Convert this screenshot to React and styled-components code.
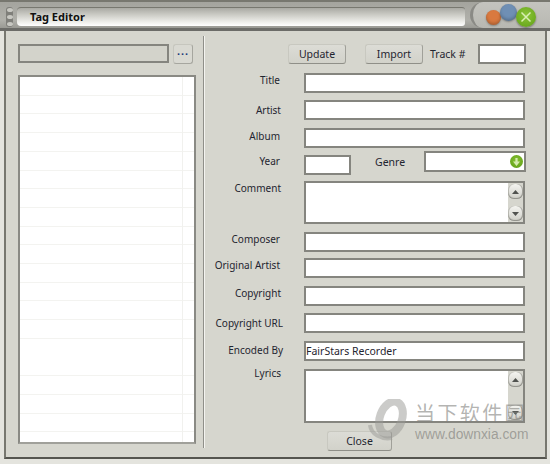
import React from "react";
import styled, { createGlobalStyle } from "styled-components";

const GlobalStyle = createGlobalStyle`
  html, body {
    margin: 0;
    padding: 0;
    background: #d6d6ce;
  }
  body {
    font-family: "Noto Sans", "Liberation Sans", sans-serif;
    font-size: 10.5px;
    color: #1f2530;
  }
`;

// top = gap above the row, dy/dx = how far the label sits off its usual place
const fields = [
  { label: "Title", top: 9, dy: 0, dx: 1 },
  { label: "Artist", top: 7, dy: 3, dx: 0 },
  { label: "Album", top: 8, dy: 1, dx: 1 },
];

const lowerFields = [
  { label: "Composer", top: 8, dy: 0, dx: 1 },
  { label: "Original Artist", top: 6, dy: 0, dx: 1 },
  { label: "Copyright", top: 8, dy: 0, dx: 0 },
  { label: "Copyright URL", top: 7, dy: 3, dx: -2 },
  { label: "Encoded By", top: 8, dy: 2, dx: -2, value: "FairStars Recorder" },
];

const ScrollArrow = ({ down }) => (
  <ScrollButton>
    <svg width="7" height="4" viewBox="0 0 7 4">
      <path d={down ? "M0 0h7L3.5 4z" : "M0 4h7L3.5 0z"} fill="#50524f" />
    </svg>
  </ScrollButton>
);

const App = () => {
  return (
    <Window>
      <GlobalStyle />
      <TitleBar>
        <Grip>
          <GripDot />
          <GripDot />
          <GripDot />
        </Grip>
        <TitlePlate>Tag Editor</TitlePlate>
        <Controls>
          <Orb $color="#d9793f" $size={15} $left={13} $top={8} />
          <Orb $color="#6f8fb4" $size={17} $left={27} $top={2} />
          <CloseOrb>
            <svg width="12" height="12" viewBox="0 0 12 12">
              <path d="M1.5 1.5l9 9M10.5 1.5l-9 9" stroke="#d9efb4" strokeWidth="1.5" />
            </svg>
          </CloseOrb>
        </Controls>
      </TitleBar>
      <Body>
        <LeftPanel>
          <PathRow>
            <PathField />
            <BrowseButton>...</BrowseButton>
          </PathRow>
          <FileList />
        </LeftPanel>
        <Divider />
        <RightPanel>
          <TopRow>
            <Button>Update</Button>
            <Button>Import</Button>
            <TrackLabel>Track #</TrackLabel>
            <TrackField />
          </TopRow>
          {fields.map((f) => (
            <Row key={f.label} $top={f.top}>
              <Label $dy={f.dy} $dx={f.dx}>{f.label}</Label>
              <Field readOnly value="" />
            </Row>
          ))}
          <Row $top={7}>
            <Label $dy={-1} $dx={1}>Year</Label>
            <YearField readOnly value="" />
            <GenreLabel>Genre</GenreLabel>
            <GenreBox>
              <GenreArrow>
                <svg width="7" height="8" viewBox="0 0 7 8">
                  <path d="M2.4 0h2.2v3.6H7L3.5 8 0 3.6h2.4z" fill="#d5ebae" />
                </svg>
              </GenreArrow>
            </GenreBox>
          </Row>
          <Row $top={6}>
            <Label $dy={0} $dx={0}>Comment</Label>
            <MemoBox $height={43}>
              <MemoBar>
                <ScrollArrow />
                <ScrollArrow down />
              </MemoBar>
            </MemoBox>
          </Row>
          {lowerFields.map((f) => (
            <Row key={f.label} $top={f.top}>
              <Label $dy={f.dy} $dx={f.dx}>{f.label}</Label>
              <Field readOnly value={f.value || ""} />
            </Row>
          ))}
          <Row $top={8}>
            <Label $dy={-3} $dx={0}>Lyrics</Label>
            <MemoBox $height={54}>
              <MemoBar>
                <ScrollArrow />
                <ScrollArrow down />
              </MemoBar>
            </MemoBox>
          </Row>
          <Footer>
            <Button $width={65}>Close</Button>
          </Footer>
        </RightPanel>
      </Body>
      <Watermark>
        <svg width="42" height="42" viewBox="0 0 42 42">
          <ellipse cx="23" cy="19" rx="11" ry="17" transform="rotate(20 23 19)" fill="none" stroke="#98989480" strokeWidth="8" />
          <path d="M2 26c1 9 11 15 22 13" fill="none" stroke="#9c9c9888" strokeWidth="4" />
        </svg>
        <WatermarkText>
          <WatermarkCn>当下软件园</WatermarkCn>
          <WatermarkUrl>www.downxia.com</WatermarkUrl>
        </WatermarkText>
      </Watermark>
    </Window>
  );
};

const Window = styled.div`
  position: relative;
  width: 550px;
  height: 464px;
  overflow: hidden;
  box-sizing: border-box;
  background: #e4e4de;
  display: flex;
  flex-direction: column;
`;

const TitleBar = styled.div`
  height: 31px;
  flex: none;
  box-sizing: border-box;
  display: flex;
  align-items: flex-start;
  padding: 5px 0 0 6px;
  border-top: 2px solid #77776f;
  border-bottom: 3px solid #6c6c68;
  background: linear-gradient(#a4a49e, #b0b0aa 70%, #9a9a94);
`;

const Grip = styled.div`
  width: 7px;
  height: 20px;
  display: flex;
  flex-direction: column;
  justify-content: space-between;
  align-items: center;
  padding: 1px 0;
  box-sizing: border-box;
  background: #7f7f7a;
  border-radius: 3px;
`;

const GripDot = styled.div`
  width: 6px;
  height: 4px;
  border-radius: 50%;
  background: #c8c8c2;
`;

const TitlePlate = styled.div`
  width: 448px;
  height: 19px;
  margin-left: 4px;
  box-sizing: border-box;
  padding-left: 13px;
  font-size: 11px;
  font-weight: 700;
  line-height: 18px;
  color: #111;
  border-radius: 4px 3px 3px 4px;
  border-top: 1px solid #77776f;
  background: linear-gradient(#a9a9a3 0%, #c9c9c3 35%, #ecece8 75%, #ffffff 100%);
`;

const Controls = styled.div`
  position: relative;
  flex: 1;
  height: 26px;
  margin-top: -5px;
  margin-left: 5px;
  border-radius: 16px 0 0 16px;
  border-left: 3px solid #8a8a85;
  background: linear-gradient(#c4c4bf, #b8b8b2);
`;

const Orb = styled.div`
  position: absolute;
  left: ${(p) => p.$left}px;
  top: ${(p) => p.$top}px;
  width: ${(p) => p.$size}px;
  height: ${(p) => p.$size}px;
  border-radius: 50%;
  background: ${(p) => p.$color};
  box-shadow: inset 0 -2px 3px rgba(0, 0, 0, 0.2), 0 1px 2px rgba(0, 0, 0, 0.3);
`;

const CloseOrb = styled.div`
  position: absolute;
  left: 43px;
  top: 5px;
  width: 20px;
  height: 20px;
  border-radius: 50%;
  display: flex;
  align-items: center;
  justify-content: center;
  background: radial-gradient(circle at 50% 40%, #8cc63a, #5f9e14);
  box-shadow: 0 1px 2px rgba(0, 0, 0, 0.4);
`;

const Body = styled.div`
  flex: none;
  height: 428px;
  box-sizing: border-box;
  margin: 0 3px 0 4px;
  padding: 0 0 0 12px;
  display: flex;
  background: #d6d6ce;
  border-left: 2px solid #77776f;
  border-right: 2px solid #77776f;
  border-bottom: 2px solid #55554f;
`;

const LeftPanel = styled.div`
  width: 178px;
  flex: none;
  padding-top: 13px;
  display: flex;
  flex-direction: column;
`;

const PathRow = styled.div`
  display: flex;
  align-items: flex-start;
  gap: 4px;
`;

const PathField = styled.div`
  width: 151px;
  height: 19px;
  box-sizing: border-box;
  background: #d3d3cb;
  border: 2px solid #85857f;
`;

const BrowseButton = styled.button`
  width: 20px;
  height: 20px;
  padding: 0 0 6px;
  box-sizing: border-box;
  font: 700 11px "Liberation Sans", sans-serif;
  letter-spacing: 1px;
  color: #223a7a;
  background: #d9d9d2;
  border: 1px solid #c6c6be;
  border-right-color: #a6a69f;
  border-bottom-color: #a6a69f;
  border-radius: 3px;
`;

const FileList = styled.div`
  width: 178px;
  height: 369px;
  margin-top: 11px;
  box-sizing: border-box;
  border: 2px solid #8a8a84;
  border-bottom-color: #a0a09a;
  background:
    linear-gradient(#f1f1ee, #f1f1ee) 162px 0 / 1px 100% no-repeat,
    repeating-linear-gradient(#fff 0, #fff 17.7px, #f3f3f0 17.7px, #f3f3f0 18.7px);
`;

const Divider = styled.div`
  width: 1px;
  height: 412px;
  margin: 5px 0 0 7px;
  flex: none;
  background: #8f8f89;
  border-right: 1px solid #f4f4f0;
`;

const RightPanel = styled.div`
  flex: 1;
  padding-top: 13px;
  display: flex;
  flex-direction: column;
`;

const TopRow = styled.div`
  display: flex;
  align-items: center;
  padding-left: 83px;
  height: 20px;
`;

const Button = styled.button`
  width: ${(p) => p.$width || 58}px;
  height: 20px;
  padding: 0 0 1px;
  margin-right: 19px;
  box-sizing: border-box;
  font: 10.5px "Noto Sans", sans-serif;
  color: #1f2530;
  background: linear-gradient(#dcdcd6, #d2d2ca);
  border: 1px solid #c8c8c0;
  border-right-color: #a0a099;
  border-bottom-color: #8f8f88;
  border-radius: 3px;
`;

const TrackLabel = styled.span`
  margin-left: -12px;
  width: 48px;
`;

const boxBorder = `
  box-sizing: border-box;
  background: #fff;
  border: 2px solid #85857f;
  outline: none;
`;

const TrackField = styled.div`
  ${boxBorder}
  width: 48px;
  height: 20px;
`;

const Row = styled.div`
  display: flex;
  align-items: flex-start;
  margin-top: ${(p) => p.$top}px;
`;

const Label = styled.label`
  width: ${(p) => 76 - p.$dx}px;
  margin-right: ${(p) => 23 + p.$dx}px;
  margin-top: ${(p) => p.$dy}px;
  flex: none;
  text-align: right;
  font-size: 10px;
  line-height: 15px;
`;

const Field = styled.input`
  ${boxBorder}
  width: 221px;
  height: 20px;
  padding: 0;
  font: 10.5px "Noto Sans", sans-serif;
  color: #1f2530;
`;

const YearField = styled.input`
  ${boxBorder}
  width: 47px;
  height: 20px;
  padding: 0;
`;

const GenreLabel = styled.span`
  width: 73px;
  padding-left: 24px;
  line-height: 15px;
  box-sizing: border-box;
`;

const GenreBox = styled.div`
  ${boxBorder}
  width: 102px;
  height: 21px;
  margin-top: -4px;
  display: flex;
  align-items: center;
  justify-content: flex-end;
  padding-right: 1px;
`;

const GenreArrow = styled.div`
  width: 13px;
  height: 13px;
  border-radius: 50%;
  display: flex;
  align-items: center;
  justify-content: center;
  background: radial-gradient(circle at 50% 40%, #86c233, #5c9a12);
`;

const MemoBox = styled.div`
  ${boxBorder}
  width: 221px;
  height: ${(p) => p.$height}px;
  display: flex;
  justify-content: flex-end;
`;

const MemoBar = styled.div`
  width: 15px;
  padding: 1px 0;
  display: flex;
  flex-direction: column;
  justify-content: space-between;
  background: #d6d6ce;
`;

const ScrollButton = styled.div`
  width: 15px;
  height: 15px;
  border-radius: 6px;
  display: flex;
  align-items: center;
  justify-content: center;
  background: linear-gradient(#f4f4f0, #cfcfc8);
  box-shadow: inset 0 -1px 1px #8e8e88, inset 1px 0 0 #bdbdb6, inset -1px 0 0 #a6a69f;
`;

const Footer = styled.div`
  display: flex;
  margin-top: 8px;
  padding-left: 122px;
`;

const Watermark = styled.div`
  position: absolute;
  left: 368px;
  top: 399px;
  display: flex;
  align-items: flex-start;
  gap: 5px;
  pointer-events: none;
`;

const WatermarkText = styled.div`
  display: flex;
  flex-direction: column;
  padding-top: 3px;
`;

const WatermarkCn = styled.span`
  font: 20px/22px "Noto Sans CJK SC", sans-serif;
  letter-spacing: 2.4px;
  color: rgba(130, 130, 126, 0.6);
`;

const WatermarkUrl = styled.span`
  font: 13.8px/16px "Liberation Sans", sans-serif;
  margin-top: 3px;
  color: rgba(120, 120, 116, 0.6);
`;

export default App;
